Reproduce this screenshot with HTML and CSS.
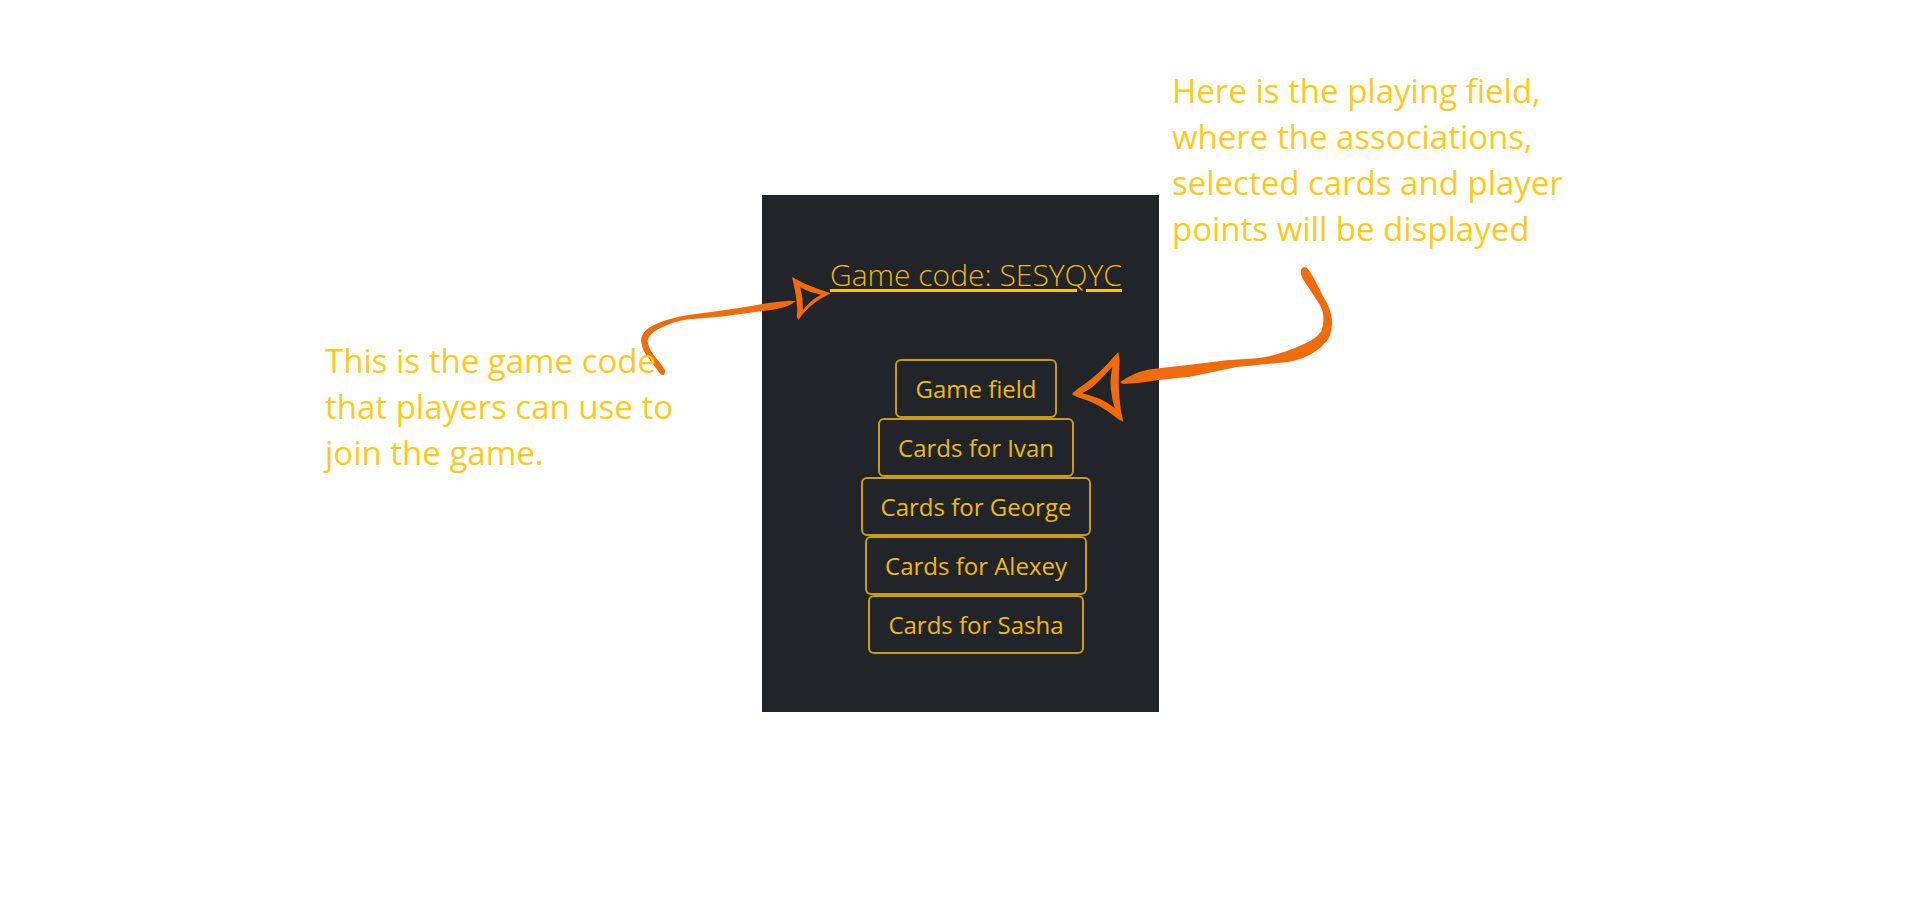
FILE: index.html
```
<!DOCTYPE html>
<html lang="en">
<head>
<meta charset="utf-8">
<title>Game code</title>
<link rel="stylesheet" href="styles.css">
</head>
<body>
<main class="stage">
  <p class="note note-code">This is the game code<br>that players can use to<br>join the game.</p>
  <section class="panel">
    <h1 class="code">Game code: SESYQYC</h1>
    <nav class="menu">
      <button class="btn" type="button">Game field</button>
      <button class="btn" type="button">Cards for Ivan</button>
      <button class="btn" type="button">Cards for George</button>
      <button class="btn" type="button">Cards for Alexey</button>
      <button class="btn" type="button">Cards for Sasha</button>
    </nav>
    <svg class="arrow arrow-code" viewBox="0 0 720 390" aria-hidden="true">
      <path d="M527 124Q510 121 490 124Q430 130 380 140L300 152L200 166Q150 174 110 191Q64 210 63 242Q66 272 90 300L118 338Q123 347 130 345Q137 341 135 331Q122 308 105 290Q83 262 83 242Q85 222 120 205Q155 186 205 178L300 170L430 153Q500 147 527 124Z"/>
      <path fill-rule="evenodd" d="M516 51Q555 74 595 87L633 100Q605 113 586 127Q555 151 535 180L530 170L532 150Q528 100 520 70ZM541 82Q550 115 549 150Q570 121 603 104Q568 98 541 82Z"/>
    </svg>
    <svg class="arrow arrow-field" viewBox="0 0 930 570" aria-hidden="true">
      <path d="M210 396Q235 378 270 365Q295 358 327 355L420 344L530 331L620 325Q690 316 760 283Q800 266 814 243Q824 220 818 185Q812 165 800 150L758 86Q747 64 757 53Q768 47 778 62Q795 88 820 140Q844 178 846 210Q848 238 838 262Q820 292 780 314Q740 335 690 338L560 351L420 380L327 390Q270 400 218 402Z"/>
      <path fill-rule="evenodd" d="M205 306L207 318L209 330Q204 400 208 440Q211 480 220 515L205 508Q150 460 80 440L66 433Q70 424 100 405Q150 370 190 322ZM187 350Q160 379 140 400Q122 418 95 430Q150 440 194 474Q177 415 183 375Z"/>
    </svg>
  </section>
  <p class="note note-field">Here is the playing field,<br>where the associations,<br>selected cards and player<br>points will be displayed</p>
</main>
</body>
</html>
```
FILE: styles.css
```
* {
  box-sizing: border-box;
}

body {
  margin: 0;
  background: #ffffff;
  font-family: "Open Sans", "Noto Sans", sans-serif;
}

.stage {
  min-height: 100vh;
  display: grid;
  grid-template-columns: 1fr auto 1fr;
  align-items: center;
}

.note {
  position: relative;
  z-index: 1;
  margin: 0;
  color: #ffc91a;
  font-size: 33px;
  line-height: 46px;
  white-space: nowrap;
}

.note-code {
  justify-self: end;
  margin-right: 89px;
  margin-bottom: 94px;
}

.note-field {
  align-self: start;
  margin-top: 68px;
  margin-left: 13px;
}

.panel {
  position: relative;
  padding: 56px 37px 58px 68px;
  background: #212529;
}

.code {
  margin: 0;
  color: #f0b40c;
  font-size: 30px;
  font-weight: 300;
  line-height: 48px;
  text-align: center;
  text-decoration: underline;
  text-decoration-color: #ffc800;
  text-decoration-thickness: 3px;
  text-underline-offset: 3px;
}

.menu {
  display: flex;
  flex-direction: column;
  align-items: center;
  margin-top: 60px;
}

.btn {
  padding: 9px 18px;
  border: 2px solid #cc9c0e;
  border-radius: 6px;
  background: transparent;
  color: #f0b90c;
  font-family: inherit;
  font-size: 24px;
  font-weight: 500;
  line-height: 37px;
}

.arrow {
  position: absolute;
  fill: #f26b0a;
}

.arrow-code {
  top: 65px;
  left: -142px;
  width: 240px;
}

.arrow-field {
  top: 55px;
  left: 288px;
  width: 310px;
}
```
